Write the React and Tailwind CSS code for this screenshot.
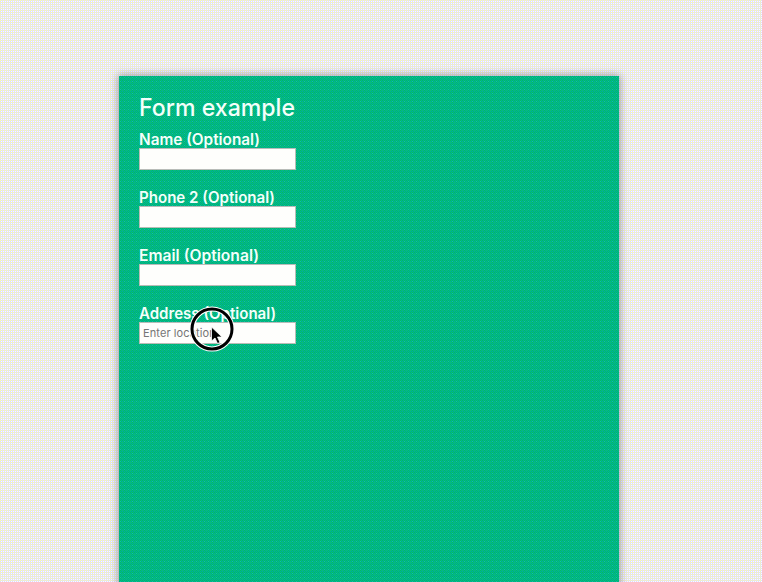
const fields = [
  { label: 'Name (Optional)', width: 121 },
  { label: 'Phone 2 (Optional)', width: 136 },
  { label: 'Email (Optional)', width: 120 },
  { label: 'Address (Optional)', width: 137, placeholder: 'Enter location' },
];

// Text set to a fixed advance width so labels keep consistent proportions.
function Label({ text, width, size, height, baseline, weight }) {
  return (
    <svg width={width + 4} height={height} className="block overflow-visible" fill="#f4fffa">
      <text x="0" y={baseline} textLength={width} lengthAdjust="spacingAndGlyphs" fontSize={size} fontWeight={weight}>{text}</text>
    </svg>
  );
}

// Fine two-tone weave used behind the page and the panel.
function Weave({ id, size, base, dots }) {
  return (
    <svg className="absolute inset-0 h-full w-full" shapeRendering="crispEdges" aria-hidden="true">
      <defs>
        <pattern id={id} width={size} height={size} patternUnits="userSpaceOnUse">
          <rect width={size} height={size} fill={base} />
          {dots.map(([x, y, color]) => <rect key={`${x}-${y}`} x={x} y={y} width="1" height="1" fill={color} />)}
        </pattern>
      </defs>
      <rect width="100%" height="100%" fill={`url(#${id})`} />
    </svg>
  );
}

export default function App() {
  return (
    <div className="relative h-[582px] w-[762px] overflow-hidden bg-[#ebebdb] pt-[76px] font-['Inter','Liberation_Sans',sans-serif]">
      <Weave id="page" size={2} base="#dadaff" dots={[[0, 0, '#ffffa8'], [1, 1, '#ffffff']]} />
      <main className="relative ml-[119px] h-[520px] w-[500px] bg-[#00b685] px-5 pt-[18px] shadow-[0_0_8px_1px_rgba(100,100,115,0.6)]">
        <Weave
          id="panel"
          size={4}
          base="#00b096"
          dots={[
            [1, 0, '#00be60'], [3, 0, '#00be60'], [1, 2, '#00be60'], [3, 2, '#0cc268'],
            [0, 1, '#00b878'], [2, 1, '#00b878'], [0, 3, '#00b878'], [2, 3, '#00b878'],
            [1, 1, '#10bcaa'],
          ]}
        />
        <div className="relative">
          <h1><Label text="Form example" width={156} size={24} height={37} baseline={22} weight={500} /></h1>
          <form className="flex flex-col gap-[19px]">
            {fields.map((f) => (
              <label key={f.label} className="block h-[39px]">
                <Label text={f.label} width={f.width} size={15.5} height={17} baseline={14.3} weight={600} />
                <input placeholder={f.placeholder} className="block h-[22px] w-[157px] border border-[#b8bcb8] bg-[#fefefc] px-[3px] text-[11px] tracking-[0.1px] text-[#555] placeholder:text-[#757575] outline-none" />
              </label>
            ))}
          </form>
        </div>
      </main>
      <svg className="absolute left-[189px] top-[306px]" width="46" height="46" viewBox="0 0 46 46">
        <circle cx="23" cy="23" r="20" fill="none" stroke="#fff" strokeWidth="5" />
        <circle cx="23" cy="23" r="20" fill="none" stroke="#000" strokeWidth="3" />
        <path d="M22.5 21v14l3.5-3 2.5 5.5 2.5-1-2.5-5.5h4.5z" fill="#000" stroke="#fff" strokeWidth=".8" />
      </svg>
    </div>
  );
}
